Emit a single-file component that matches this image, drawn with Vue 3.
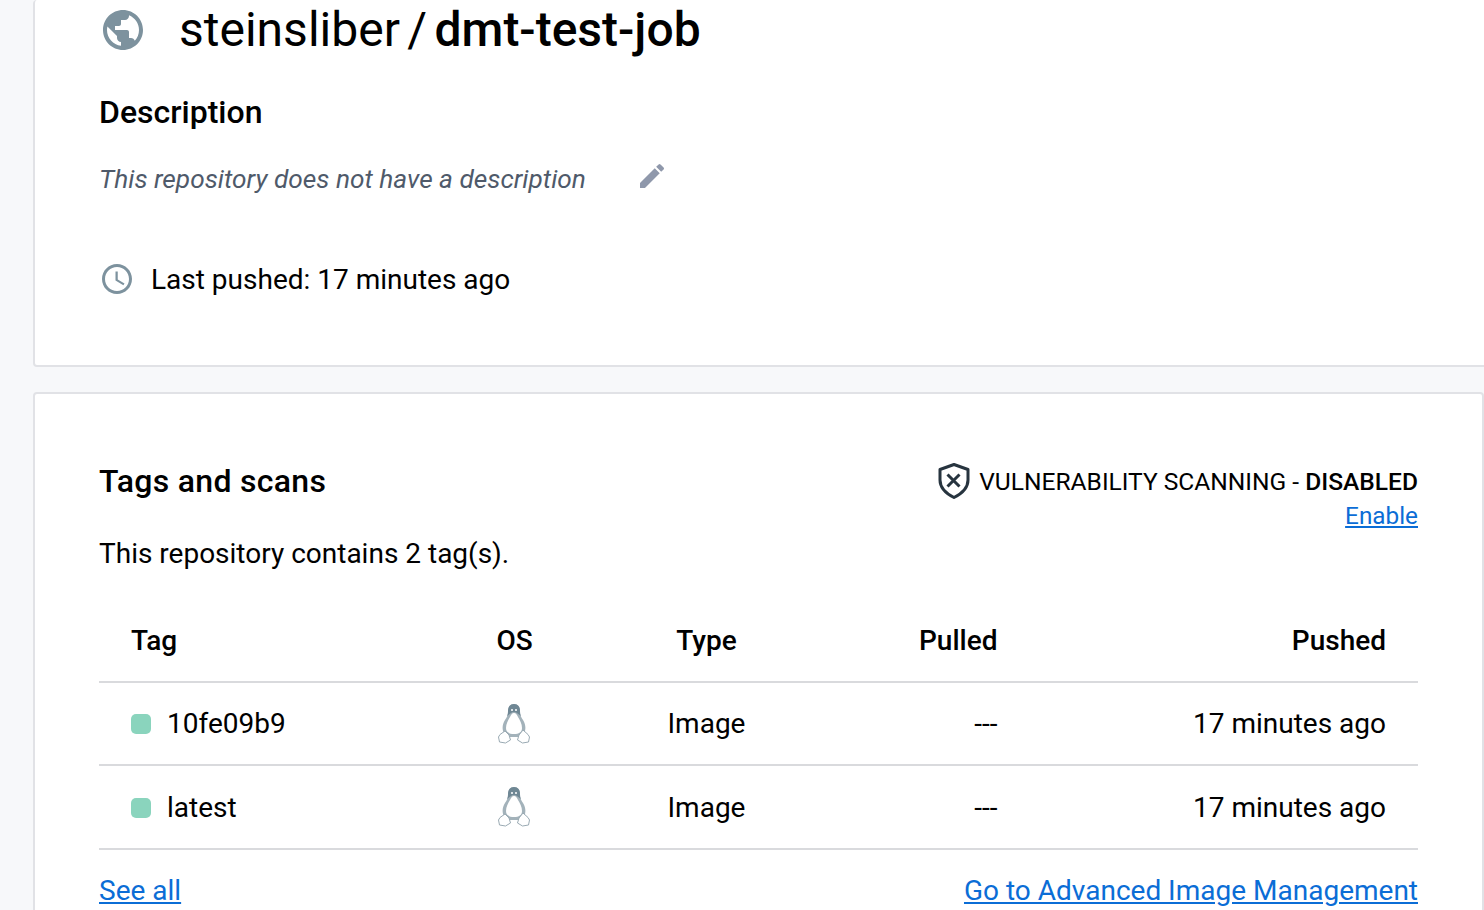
<template>
  <div class="page">
    <section class="card top-card">
      <div class="repo-title">
        <svg class="globe" width="48" height="48" viewBox="0 0 24 24" fill="#7d929e">
          <path d="M12 2C6.48 2 2 6.48 2 12s4.48 10 10 10 10-4.48 10-10S17.52 2 12 2zm-1 17.93c-3.95-.49-7-3.85-7-7.93 0-.62.08-1.21.21-1.79L9 15v1c0 1.1.9 2 2 2v1.93zm6.9-2.54c-.26-.81-1-1.39-1.9-1.39h-1v-3c0-.55-.45-1-1-1H8v-2h2c.55 0 1-.45 1-1V7h2c1.1 0 2-.9 2-2v-.41c2.93 1.19 5 4.06 5 7.41 0 2.08-.8 3.97-2.1 5.39z" />
        </svg>
        <h1>steinsliber / <strong>dmt-test-job</strong></h1>
      </div>
      <h2 class="section-title">Description</h2>
      <div class="description">
        <em>This repository does not have a description</em>
        <svg width="32" height="32" viewBox="0 0 24 24" fill="#8f98ab">
          <path d="M3 17.25V21h3.75L17.81 9.94l-3.75-3.75L3 17.25zM20.71 7.04a1 1 0 0 0 0-1.41l-2.34-2.34a1 1 0 0 0-1.41 0l-1.83 1.83 3.75 3.75 1.83-1.83z" />
        </svg>
      </div>
      <div class="pushed">
        <svg width="36" height="36" viewBox="0 0 24 24" fill="#7d929e">
          <path d="M11.99 2C6.47 2 2 6.48 2 12s4.47 10 9.99 10C17.52 22 22 17.52 22 12S17.52 2 11.99 2zM12 20c-4.42 0-8-3.58-8-8s3.58-8 8-8 8 3.58 8 8-3.58 8-8 8zm.5-13H11v6l5.25 3.15.75-1.23-4.5-2.67z" />
        </svg>
        <span>Last pushed: 17 minutes ago</span>
      </div>
    </section>

    <section class="card tags-card">
      <div class="tags-head">
        <div>
          <h2 class="section-title tags-title">Tags and scans</h2>
          <p class="count">This repository contains 2 tag(s).</p>
        </div>
        <div class="scanning">
          <div class="scan-line">
            <svg width="34" height="38" viewBox="0 0 34 38" fill="none" stroke="#27343f" stroke-width="3">
              <path d="M17 2.500l14 5v10.500c0 8-6 13.500-14 17.500C9 31.500 3 26 3 18V7.500z" stroke-linejoin="round" />
              <path d="M10.500 12.500l12 12M22.500 12.500l-12 12" stroke-width="3" />
            </svg>
            <span>VULNERABILITY SCANNING - <b>DISABLED</b></span>
          </div>
          <a href="#">Enable</a>
        </div>
      </div>

      <table class="tags">
        <thead>
          <tr>
            <th class="col-tag">Tag</th>
            <th class="col-os">OS</th>
            <th class="col-type">Type</th>
            <th class="col-pulled">Pulled</th>
            <th class="col-pushed">Pushed</th>
          </tr>
        </thead>
        <tbody>
          <tr v-for="tag in tags" :key="tag">
            <td class="col-tag"><span class="dot"></span>{{ tag }}</td>
            <td class="col-os">
              <svg class="tux" width="34" height="42" viewBox="1 1 34 42">
                <path d="M17 2c-4 0-6 3-6 7 0 4-1 6-3 9-2 3-3 7-2 11 1 3 3 6 6 6h10c3 0 5-3 6-6 1-4 0-8-2-11-2-3-3-5-3-9 0-4-2-7-6-7z" fill="#a3b2ba" />
                <path d="M17 11c-2 0-3 2-4 4-2 3-4 7-4 11 0 4 3 6 8 6s8-2 8-6c0-4-2-8-4-11-1-2-2-4-4-4z" fill="#fff" />
                <path d="M17 2c-4 0-6 3-6 7 0 2 0 3-1 5 2-1 4-4 7-4s5 3 7 4c-1-2-1-3-1-5 0-4-2-7-6-7z" fill="#6f8794" />
                <path d="M14 8h2M18 8h2" stroke="#fff" stroke-width="1.500" />
                <path d="M3 32.500l5-3.500 4 4 1.500 5-5 3-6-1-1-5zM31 32.500l-5-4.500-4 5-1.500 5 5 3 6-1 1-5z" fill="#fff" stroke="#9aaab3" stroke-width="1" stroke-linejoin="round" />
              </svg>
            </td>
            <td class="col-type">Image</td>
            <td class="col-pulled">---</td>
            <td class="col-pushed">17 minutes ago</td>
          </tr>
        </tbody>
      </table>

      <div class="links">
        <a href="#">See all</a>
        <a href="#">Go to Advanced Image Management</a>
      </div>
    </section>
  </div>
</template>

<script setup>
const tags = ['10fe09b9', 'latest']
</script>

<style>
html, body {
  margin: 0;
  height: 100%;
  overflow: hidden;
  background: #f7f8fa;
}
</style>

<style scoped>
.page {
  height: 910px;
  overflow: hidden;
  padding-left: 33px;
  font-family: Roboto, "Liberation Sans", sans-serif;
  color: #000;
  background: #f7f8fa;
}

.card {
  background: #fff;
  border: 2px solid #e1e2e6;
  border-radius: 4px;
  box-sizing: border-box;
}

.top-card {
  height: 367px;
  margin-right: -20px;
  border-top: 0;
  padding-left: 64px;
}

.repo-title {
  display: flex;
  align-items: center;
  height: 60px;
}

h1 {
  margin: 0 0 0 32px;
  font-size: 48px;
  font-weight: 400;
  line-height: 60px;
  word-spacing: -4.500px;
}

h1 strong {
  font-weight: 500;
}

.section-title {
  margin: 0;
  font-size: 32px;
  font-weight: 500;
  line-height: 40px;
}

.top-card .section-title {
  margin-top: 32px;
}

.tags-title {
  letter-spacing: 0.3px;
  margin-top: -1px;
}

.description {
  display: flex;
  align-items: center;
  margin-top: 32px;
  font-size: 26.250px;
  color: #4f5a6a;
}

.description svg {
  margin-left: 50px;
  margin-top: -7px;
}

.pushed {
  display: flex;
  align-items: center;
  gap: 16px;
  margin-top: 67px;
  font-size: 28px;
}

.tags-card {
  height: 600px;
  margin-top: 25px;
  padding: 0 64px;
}

.tags-head {
  display: flex;
  justify-content: space-between;
  align-items: flex-start;
  padding-top: 68px;
}

.count {
  margin: 37px 0 0;
  font-size: 28px;
  line-height: 32px;
}

.scanning {
  text-align: right;
  font-size: 24.550px;
}

.scan-line {
  display: flex;
  align-items: center;
  gap: 8px;
  height: 38px;
}

.scanning b {
  font-weight: 500;
}

a {
  color: #0b6dd6;
  text-decoration: underline;
}

.scanning a {
  display: block;
  margin-top: 1px;
  line-height: 30px;
  font-size: 24.300px;
}

.tags {
  width: 100%;
  table-layout: fixed;
  margin-top: 30px;
  border-collapse: collapse;
  font-size: 28px;
}

th,
td {
  box-sizing: border-box;
  padding: 0;
}

th {
  height: 82px;
  font-weight: 500;
  border-bottom: 2px solid #d9dadd;
}

td {
  height: 84px;
  border-bottom: 2px solid #d9dadd;
}

tr:first-child td {
  height: 83px;
}

.col-tag {
  width: 365.500px;
  padding-left: 32px;
  text-align: left;
}

.col-os {
  width: 100px;
  text-align: center;
}

.col-type {
  width: 284px;
  text-align: center;
}

.col-pulled {
  width: 149px;
  text-align: right;
}

.col-pushed {
  padding-right: 32px;
  text-align: right;
}

.dot {
  display: inline-block;
  width: 20px;
  height: 20px;
  margin-right: 16px;
  border-radius: 5px;
  background: #8ad4bd;
  vertical-align: -1px;
}

.tux {
  display: block;
  margin: 0 auto;
}

.links {
  display: flex;
  justify-content: space-between;
  margin-top: 24px;
  font-size: 28px;
}
</style>
